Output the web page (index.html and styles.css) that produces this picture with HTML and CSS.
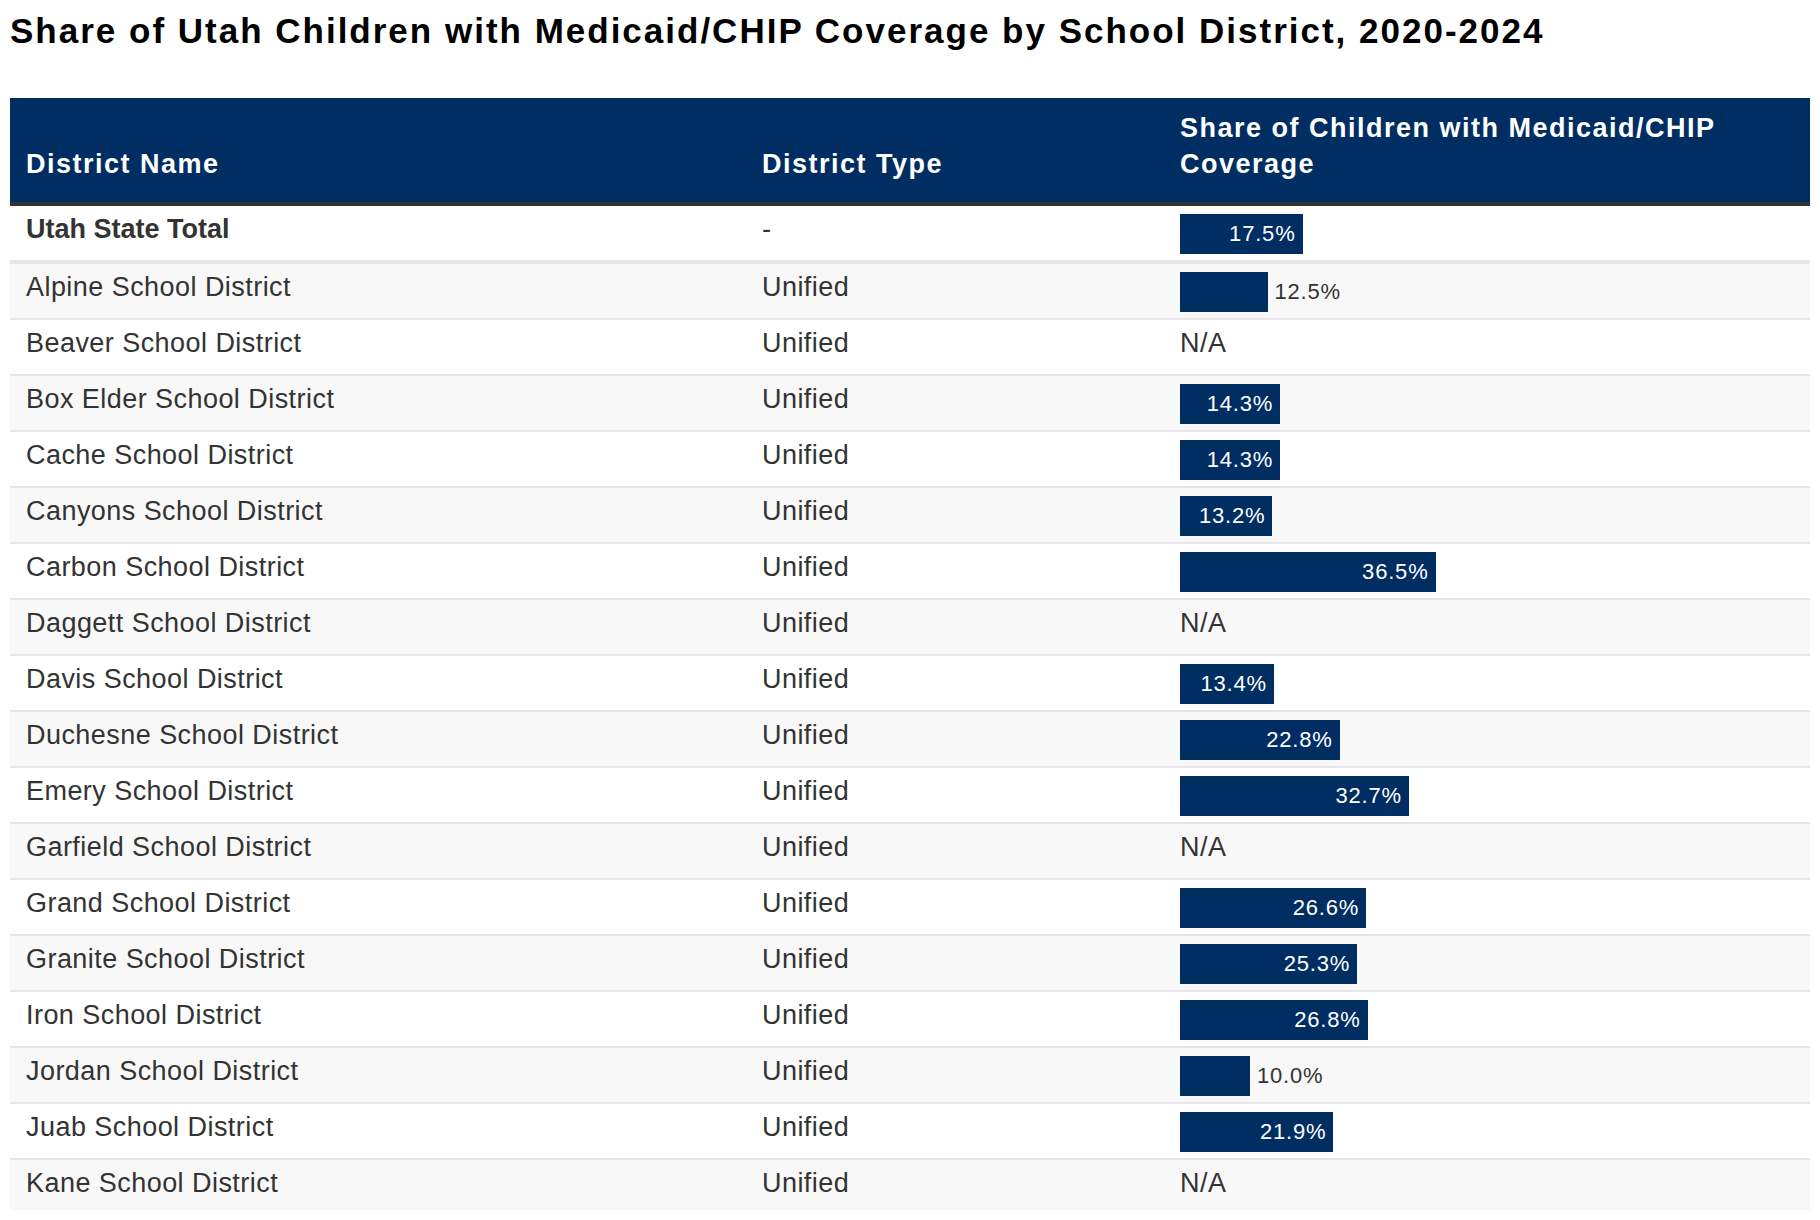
FILE: index.html
```html
<!DOCTYPE html>
<html lang="en">
<head>
<meta charset="utf-8">
<title>Share of Utah Children with Medicaid/CHIP Coverage by School District, 2020-2024</title>
<link rel="stylesheet" href="styles.css">
</head>
<body>
<h1 class="title">Share of Utah Children with Medicaid/CHIP Coverage by School District, 2020-2024</h1>
<div class="table-wrap">
<table class="data-table">
<colgroup>
<col class="col-name">
<col class="col-type">
<col class="col-share">
</colgroup>
<thead>
<tr>
<th>District Name</th>
<th>District Type</th>
<th>Share of Children with Medicaid/CHIP Coverage</th>
</tr>
</thead>
<tbody>
<tr class="total-row">
<td class="name-cell">Utah State Total</td>
<td>-</td>
<td><div class="bar-cell"><div class="bar" style="--v:17.5"><span class="bar-label">17.5%</span></div></div></td>
</tr>
<tr>
<td>Alpine School District</td>
<td>Unified</td>
<td><div class="bar-cell"><div class="bar" style="--v:12.5"></div><span class="bar-label-out">12.5%</span></div></td>
</tr>
<tr>
<td>Beaver School District</td>
<td>Unified</td>
<td><div class="na-cell">N/A</div></td>
</tr>
<tr>
<td>Box Elder School District</td>
<td>Unified</td>
<td><div class="bar-cell"><div class="bar" style="--v:14.3"><span class="bar-label">14.3%</span></div></div></td>
</tr>
<tr>
<td>Cache School District</td>
<td>Unified</td>
<td><div class="bar-cell"><div class="bar" style="--v:14.3"><span class="bar-label">14.3%</span></div></div></td>
</tr>
<tr>
<td>Canyons School District</td>
<td>Unified</td>
<td><div class="bar-cell"><div class="bar" style="--v:13.2"><span class="bar-label">13.2%</span></div></div></td>
</tr>
<tr>
<td>Carbon School District</td>
<td>Unified</td>
<td><div class="bar-cell"><div class="bar" style="--v:36.5"><span class="bar-label">36.5%</span></div></div></td>
</tr>
<tr>
<td>Daggett School District</td>
<td>Unified</td>
<td><div class="na-cell">N/A</div></td>
</tr>
<tr>
<td>Davis School District</td>
<td>Unified</td>
<td><div class="bar-cell"><div class="bar" style="--v:13.4"><span class="bar-label">13.4%</span></div></div></td>
</tr>
<tr>
<td>Duchesne School District</td>
<td>Unified</td>
<td><div class="bar-cell"><div class="bar" style="--v:22.8"><span class="bar-label">22.8%</span></div></div></td>
</tr>
<tr>
<td>Emery School District</td>
<td>Unified</td>
<td><div class="bar-cell"><div class="bar" style="--v:32.7"><span class="bar-label">32.7%</span></div></div></td>
</tr>
<tr>
<td>Garfield School District</td>
<td>Unified</td>
<td><div class="na-cell">N/A</div></td>
</tr>
<tr>
<td>Grand School District</td>
<td>Unified</td>
<td><div class="bar-cell"><div class="bar" style="--v:26.6"><span class="bar-label">26.6%</span></div></div></td>
</tr>
<tr>
<td>Granite School District</td>
<td>Unified</td>
<td><div class="bar-cell"><div class="bar" style="--v:25.3"><span class="bar-label">25.3%</span></div></div></td>
</tr>
<tr>
<td>Iron School District</td>
<td>Unified</td>
<td><div class="bar-cell"><div class="bar" style="--v:26.8"><span class="bar-label">26.8%</span></div></div></td>
</tr>
<tr>
<td>Jordan School District</td>
<td>Unified</td>
<td><div class="bar-cell"><div class="bar" style="--v:10.0"></div><span class="bar-label-out">10.0%</span></div></td>
</tr>
<tr>
<td>Juab School District</td>
<td>Unified</td>
<td><div class="bar-cell"><div class="bar" style="--v:21.9"><span class="bar-label">21.9%</span></div></div></td>
</tr>
<tr>
<td>Kane School District</td>
<td>Unified</td>
<td><div class="na-cell">N/A</div></td>
</tr>
</tbody>
</table>
</div>
</body>
</html>
```

FILE: styles.css
```css
html, body {
  margin: 0;
  padding: 0;
}

body {
  box-sizing: border-box;
  height: 100vh;
  padding: 10px;
  display: flex;
  flex-direction: column;
  background: #ffffff;
  font-family: "Liberation Sans", Arial, Helvetica, sans-serif;
  color: #333333;
  overflow: hidden;
}

.title {
  margin: 2px 0 48px;
  font-size: 35px;
  line-height: 38px;
  font-weight: 700;
  letter-spacing: 2px;
  color: #000000;
  white-space: nowrap;
}

.table-wrap {
  flex: 1;
  min-height: 0;
  overflow: hidden;
}

.data-table {
  width: 1800px;
  table-layout: fixed;
  border-collapse: separate;
  border-spacing: 0;
}

.col-name { width: 736px; }
.col-type { width: 418px; }
.col-share { width: 646px; }

.data-table th {
  background: #002e62;
  color: #ffffff;
  text-align: left;
  vertical-align: bottom;
  font-size: 27px;
  line-height: 36px;
  font-weight: 700;
  letter-spacing: 1.5px;
  padding: 12px 16px 20px;
  border-bottom: 4px solid #333333;
}

.data-table td {
  vertical-align: top;
  padding: 8px 16px 6px;
  font-size: 27px;
  line-height: 31px;
  letter-spacing: 0.45px;
  color: #333333;
  border-bottom: 2px solid #e6e6e6;
  background: #ffffff;
  white-space: nowrap;
}

.data-table tbody tr:nth-child(even) td {
  background: #f8f8f8;
}

.data-table .total-row td {
  border-bottom-width: 4px;
}

.data-table .name-cell {
  font-weight: 700;
  letter-spacing: 0;
}

.bar-cell {
  display: flex;
  align-items: center;
  height: 40px;
}

.bar {
  height: 40px;
  width: calc(var(--v) * 7px);
  background: #002e62;
  display: flex;
  justify-content: flex-end;
  align-items: center;
  flex: none;
}

.bar-label {
  color: #ffffff;
  font-size: 22px;
  line-height: 40px;
  letter-spacing: 0.8px;
  padding-right: 7px;
}

.bar-label-out {
  color: #333333;
  font-size: 22px;
  line-height: 40px;
  letter-spacing: 0.8px;
  margin-left: 7px;
}

.na-cell {
  height: 40px;
  line-height: 31px;
}
```
